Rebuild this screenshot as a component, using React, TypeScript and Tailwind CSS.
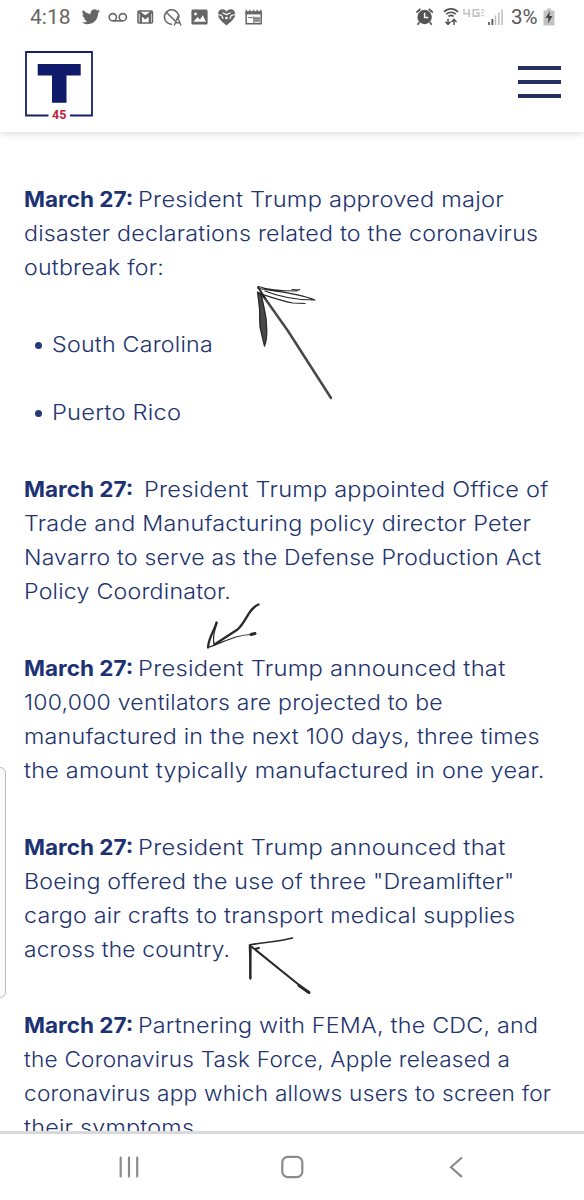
import { useLayoutEffect, useRef, useState } from 'react';

type FitProps = { text: string; width: number; bold?: boolean };

/* Widens the letters of one run of text so that it spans the given width. */
function Fit({ text, width, bold }: FitProps) {
  const ref = useRef<HTMLSpanElement>(null);
  const [scale, setScale] = useState(1);
  useLayoutEffect(() => {
    setScale(width / ref.current!.offsetWidth);
  }, [text, width]);
  return (
    <span className="flex shrink-0" style={{ width }}>
      <span
        ref={ref}
        className={bold ? 'shrink-0 origin-left font-bold text-[#1d3273]' : 'shrink-0 origin-left font-[350] tracking-[0.2px]'}
        style={{ transform: `scaleX(${scale})` }}
      >
        {text}
      </span>
    </span>
  );
}

type Entry = { lead: [string, number]; gap?: boolean; lines: [string, number][] };

const first: Entry = {
  lead: ['President Trump approved major', 366],
  lines: [
    ['disaster declarations related to the coronavirus', 514],
    ['outbreak for:', 140],
  ],
};

const entries: Entry[] = [
  {
    lead: ['President Trump appointed Office of', 405],
    gap: true,
    lines: [
      ['Trade and Manufacturing policy director Peter', 507],
      ['Navarro to serve as the Defense Production Act', 517],
      ['Policy Coordinator.', 207],
    ],
  },
  {
    lead: ['President Trump announced that', 368],
    lines: [
      ['100,000 ventilators are projected to be', 419],
      ['manufactured in the next 100 days, three times', 516],
      ['the amount typically manufactured in one year.', 521],
    ],
  },
  {
    lead: ['President Trump announced that', 368],
    lines: [
      ['Boeing offered the use of three "Dreamlifter"', 490],
      ['cargo air crafts to transport medical supplies', 491],
      ['across the country.', 206],
    ],
  },
  {
    lead: ['Partnering with FEMA, the CDC, and', 400],
    lines: [
      ['the Coronavirus Task Force, Apple released a', 486],
      ['coronavirus app which allows users to screen for', 527],
      ['their symptoms.', 177],
    ],
  },
];

function Paragraph({ entry }: { entry: Entry }) {
  return (
    <div className="flex flex-col">
      <p className={entry.gap ? 'flex gap-[11px]' : 'flex gap-[5px]'}>
        <Fit text="March 27:" width={109} bold />
        <Fit text={entry.lead[0]} width={entry.lead[1]} />
      </p>
      {entry.lines.map(([text, width]) => (
        <p key={text} className="flex">
          <Fit text={text} width={width} />
        </p>
      ))}
    </div>
  );
}

function StatusIcons() {
  return (
    <svg className="ml-[10px] h-6 w-[184px] shrink-0" viewBox="81 5 184 24" fill="none" stroke="#666" strokeWidth="1.6">
      <g transform="translate(81.8 7.6) scale(.76)" fill="#666" stroke="none">
        <path d="M23.95 4.57a10 10 0 0 1-2.82.77 4.96 4.96 0 0 0 2.16-2.72 9.9 9.9 0 0 1-3.12 1.19 4.92 4.92 0 0 0-8.38 4.48A13.93 13.93 0 0 1 1.64 3.16a4.92 4.92 0 0 0 1.52 6.57 4.9 4.9 0 0 1-2.23-.61v.06a4.92 4.92 0 0 0 3.95 4.83 5 5 0 0 1-2.21.08 4.94 4.94 0 0 0 4.6 3.42A9.87 9.87 0 0 1 0 19.54a13.94 13.94 0 0 0 7.55 2.21c9.05 0 14-7.5 14-13.98l-.02-.64a9.94 9.94 0 0 0 2.42-2.56z" />
      </g>
      <circle cx="112.8" cy="17.2" r="3.6" />
      <circle cx="122.8" cy="17.2" r="3.6" />
      <path d="M112.8 20.9h10" />
      <rect x="138" y="11" width="14.4" height="12" rx="1" />
      <path d="M140.8 23v-9l4.5 4 4.5-4v9M139 12l6.3 5 6.3-5" strokeWidth="2.3" />
      <path d="M172.1 24.2a7.2 7.2 0 1 1 6.7-6.4M166 12l9.5 9.2" />
      <path d="m174.2 25.5 3.4-8.2 3.4 8.2m-5.6-2.7h4.4" strokeWidth="1.4" />
      <path d="M193 9.4h13c1 0 1.6.6 1.6 1.6v12c0 1-.6 1.6-1.6 1.6h-13c-1 0-1.6-.6-1.6-1.6V11c0-1 .6-1.6 1.6-1.6z" fill="#666" stroke="none" />
      <path d="m193.500 21.700 4-4.600 2.400 2.500 3-4.300 3 6.400z" fill="#fff" stroke="none" />
      <circle cx="195.500" cy="14" r="1.400" fill="#fff" stroke="none" />
      <path d="M218 14.500c0-6 6-6.600 8.500-2.800 2.500-3.800 8.700-3.200 8.700 2.800 0 4-4.200 7.200-8.700 10.900-4.500-3.700-8.500-6.900-8.500-10.900z" fill="#666" stroke="none" />
      <path d="m217.500 14.500 4.200 1 1.400 3.200m12.400-4.200-4.200 1-1.400 3.200M222.500 12.800l4 1.800 4.100-1.800" stroke="#fff" strokeWidth="1.200" />
      <circle cx="226.500" cy="18" r="1.300" fill="#fff" stroke="none" />
      <path d="M246.200 12.500h15v11.300h-15z" strokeWidth="1.500" />
      <path d="M245.400 11.200h16.500v3.200h-16.500z" fill="#666" stroke="none" />
      <path d="M246.300 9.700v2m3.500-2v2m3.700-2v2m3.700-2v2m3.600-2v2" strokeWidth="1.300" />
      <path d="M248.200 17.600h4.600m1-1.100v6.500" strokeWidth="1" />
      <path d="M254 16.800h6.500v5.700H254z" fill="#aaa" stroke="none" />
      <path d="M254 18.500h6m-6 2h6" strokeWidth=".7" />
    </svg>
  );
}

function SignalIcons() {
  return (
    <svg className="h-6 w-[92px] shrink-0" viewBox="416 5 92 24" fill="none" stroke="#555" strokeWidth="1.6">
      <circle cx="424.6" cy="17" r="7.2" fill="#555" stroke="none" />
      <path d="m416.4 12.5 4-3.5m8.4 0 4 3.5M419.500 22.200l-2 2.500m12.200-2.500 2 2.500" strokeWidth="1.8" />
      <path d="M424.6 12.700v4.800h3.800" stroke="#fff" strokeWidth="1.5" />
      <path d="M444 11.800c4-4 10-4 14 0M446.300 14.200c2.800-2.600 6.800-2.600 9.500 0M448.600 16.500c1.500-1.300 3.500-1.300 5 0" strokeWidth="1.7" />
      <path d="M448 18.800v5.500m-2.500-2.600 2.500 2.700 2.500-2.700M454 25v-5.700m-2.500 2.700 2.500-2.700 2.500 2.700" strokeWidth="1.5" />
      <path d="M464 9v4.800h6.500M469 9v8M479.300 9.800h-6v6.300h5.500v-3h-2.500" stroke="#c1c1c1" strokeWidth="1.6" />
      <path d="M481 10h3.500M481 12.800h3M481 15.600h3.500" stroke="#d0d0d0" strokeWidth="1.3" />
      <path d="M489 22v3M492.400 19v6" strokeWidth="1.7" />
      <path d="M495.500 15.500V25m3.300-12.500V25m3.300-15.500V25" stroke="#bcbcbc" strokeWidth="1.500" />
    </svg>
  );
}

function Logo() {
  return (
    <div className="relative h-[66px] w-[68px]">
      <svg className="h-[66px] w-[68px]" viewBox="0 0 68 66" fill="none">
        <path d="M23.500 64.500H1V1h66v63.500H45" stroke="#16206b" strokeWidth="1.800" />
        <path d="M12.700 13h43v11.500H41.500v27.300H27V24.500H12.700z" fill="#101b6b" />
      </svg>
      <span className="absolute left-[27px] top-[57px] font-['Roboto'] text-[12.5px] font-bold leading-[14px] text-[#c51b3d]">45</span>
    </div>
  );
}

export default function App() {
  return (
    <main className="relative flex h-[1200px] w-[584px] flex-col overflow-hidden bg-white font-['Inter',sans-serif]">
      <header className="flex h-[132px] shrink-0 flex-col shadow-[0_1px_8px_rgba(0,0,0,0.17)]">
        <div className="flex h-[35px] items-start pl-[30px] pr-[29px] pt-[5px] font-['Roboto',sans-serif] text-[21px] leading-[25px] text-[#666]">
          <span className="w-[41px] shrink-0">4:18</span>
          <StatusIcons />
          <div className="ml-auto flex items-start">
            <SignalIcons />
            <span className="ml-[3px] w-[30px] text-[20.5px] text-[#555]">3%</span>
            <svg className="ml-[2px] h-6 w-[12px]" viewBox="0 0 12 24">
              <path d="M4 3.500h4v2h3.500v15H.5v-15H4z" fill="#c2c2c2" />
              <path d="M7 6 2.500 13H5.500L5 18.500 9.500 11H6.300z" fill="#444" />
            </svg>
          </div>
        </div>
        <div className="flex items-start justify-between pl-[25px] pr-[23px] pt-4">
          <Logo />
          <div className="mt-[15px] flex w-[43px] flex-col gap-[10px]">
            <span className="h-1 bg-[#24305f]" />
            <span className="h-1 bg-[#24305f]" />
            <span className="h-1 bg-[#24305f]" />
          </div>
        </div>
      </header>

      <section className="flex h-[999px] shrink-0 flex-col gap-[42.8px] overflow-hidden whitespace-pre pl-6 pt-[50.4px] text-[21.5px] leading-[34px] text-[#22336e]">
        <Paragraph entry={first} />
        <ul className="flex flex-col gap-[34px]">
          {([['South Carolina', 161], ['Puerto Rico', 129]] as [string, number][]).map(([text, width]) => (
            <li key={text} className="flex items-center pl-[11px]">
              <span className="mr-[10px] mt-[2px] size-[7px] rounded-full bg-[#243a78]" />
              <Fit text={text} width={width} />
            </li>
          ))}
        </ul>
        {entries.map((entry) => (
          <Paragraph key={entry.lines[0][0]} entry={entry} />
        ))}
      </section>

      <footer className="flex h-[69px] shrink-0 items-center justify-center border-t-[3px] border-[#d9d9d9] bg-white">
        <svg className="h-[66px] w-[584px]" viewBox="0 1134 584 66" fill="none" stroke="#8b8b8b" strokeWidth="2.2" strokeLinecap="round">
          <path d="M120.700 1157.500v19M129 1157.500v19M137.200 1157.500v19" />
          <rect x="282.3" y="1156.8" width="20" height="20.4" rx="5.5" />
          <path d="m461.300 1158-10.300 9.200 10.300 9.200" />
        </svg>
      </footer>

      <div className="absolute -left-2 top-[767px] h-[231px] w-[14px] rounded-[6px] border border-[#bdbdbd] bg-[#fafafa]" />

      <svg className="pointer-events-none absolute inset-0 h-[1200px] w-[584px]" viewBox="0 0 584 1200" fill="none" stroke="#292929" strokeLinecap="round" strokeLinejoin="round">
        <path d="m264 297 24 34 43 67" stroke="#484848" strokeWidth="2.5" />
        <path d="M258.500 286.500c11 4 27 4.500 38 4.500l3-1.500M292 289.500l7 .5M258 288.500c20 3 40 5 57 11.500-16 0-33-2-50-9M261 294c10 3 20 7 32 9l12 .5" strokeWidth="1.200" />
        <path d="m258 287 7 11-6-5 2 34" strokeWidth="2" />
        <path d="m257.500 292 2 15 .5 20 4.500 19c3-7 3-24 0-36l-3-14z" fill="#4a4a4a" strokeWidth="1.300" />
        <path d="M258.500 604.500c-10 4-12 17-21 25l-23 15M216.500 622.500c-2 8-8 15-8.500 25" strokeWidth="2.300" />
        <path d="M217 623c-2 7-5 13-3 21M208 647.500c15-5 28-13 44-13" strokeWidth="1.200" />
        <path d="m251 634.500 4-1" strokeWidth="3" />
        <path d="M250.500 979l-1-34c14-3 28-3 43-7" strokeWidth="1.600" />
        <path d="m250.500 946-.2 32" strokeWidth="2.400" />
        <path d="m252 947 57 46M255 949l4-1" strokeWidth="2" />
        <path d="m299 985.500 10 7" strokeWidth="3" />
      </svg>
    </main>
  );
}
